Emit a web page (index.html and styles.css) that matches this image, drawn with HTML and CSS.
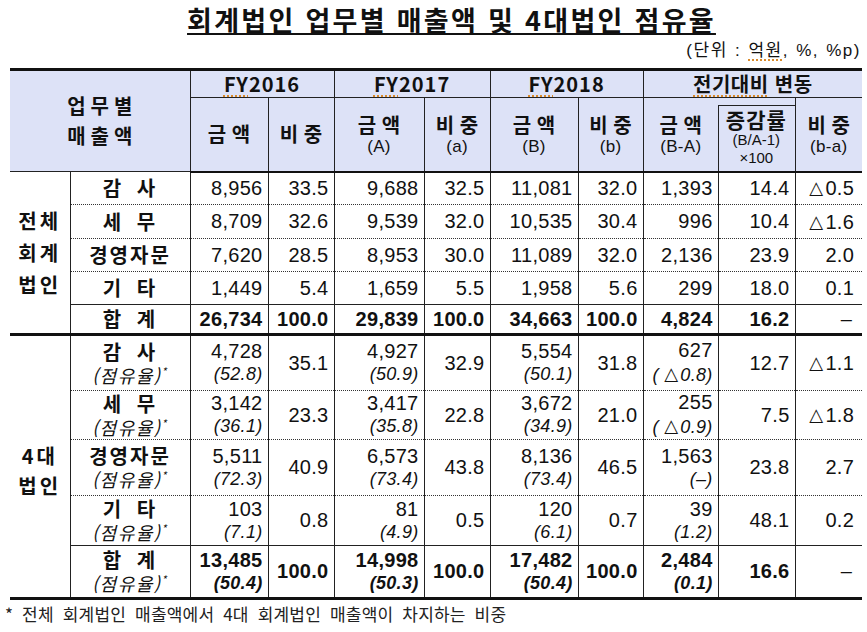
FILE: index.html
```html
<!DOCTYPE html>
<html lang="ko">
<head>
<meta charset="utf-8">
<title>회계법인 업무별 매출액 및 4대법인 점유율</title>
<link rel="stylesheet" href="styles.css">
</head>
<body>
<div class="page">
  <h1 class="title"><span>회계법인 업무별 매출액 및 4대법인 점유율</span></h1>
  <p class="unit">(단위 : <span class="spell">억원</span>, %, %p)</p>
  <table class="sales">
    <colgroup>
      <col class="c-grp"><col class="c-cat">
      <col class="c-a16"><col class="c-r16">
      <col class="c-a17"><col class="c-r17">
      <col class="c-a18"><col class="c-r18">
      <col class="c-ad"><col class="c-gr"><col class="c-rd">
    </colgroup>
    <thead>
      <tr class="yr">
        <th colspan="2" rowspan="2" class="corner"><span class="ln">업무별</span><span class="ln">매출액</span></th>
        <th colspan="2"><span class="spell">FY</span>2016</th>
        <th colspan="2"><span class="spell">FY</span>2017</th>
        <th colspan="2"><span class="spell">FY</span>2018</th>
        <th colspan="3" class="ko-h"><span class="spell">전기대비</span> 변동</th>
      </tr>
      <tr class="sub">
        <th><span class="k">금 액</span></th>
        <th><span class="k">비 중</span></th>
        <th><span class="k">금 액</span><span class="s">(A)</span></th>
        <th><span class="k">비 중</span><span class="s">(a)</span></th>
        <th><span class="k">금 액</span><span class="s">(B)</span></th>
        <th><span class="k">비 중</span><span class="s">(b)</span></th>
        <th class="pre-box"><span class="k">금 액</span><span class="s">(B-A)</span></th>
        <th class="box"><span class="k wide">증감률</span><span class="xs">(B/A-1)</span><span class="xs">×100</span></th>
        <th><span class="k">비 중</span><span class="s">(b-a)</span></th>
      </tr>
    </thead>
    <tbody class="s1">
      <tr class="r33">
        <th rowspan="5" class="grp"><span class="ln">전체</span><span class="ln">회계</span><span class="ln">법인</span></th>
        <th class="cat">감 사</th>
        <td>8,956</td><td>33.5</td><td>9,688</td><td>32.5</td><td>11,081</td><td>32.0</td><td>1,393</td><td>14.4</td><td class="d"><span class="tri">△</span>0.5</td>
      </tr>
      <tr class="r34">
        <th class="cat">세 무</th>
        <td>8,709</td><td>32.6</td><td>9,539</td><td>32.0</td><td>10,535</td><td>30.4</td><td>996</td><td>10.4</td><td class="d"><span class="tri">△</span>1.6</td>
      </tr>
      <tr class="r33">
        <th class="cat">경영자문</th>
        <td>7,620</td><td>28.5</td><td>8,953</td><td>30.0</td><td>11,089</td><td>32.0</td><td>2,136</td><td>23.9</td><td class="d">2.0</td>
      </tr>
      <tr class="r33">
        <th class="cat">기 타</th>
        <td>1,449</td><td>5.4</td><td>1,659</td><td>5.5</td><td>1,958</td><td>5.6</td><td>299</td><td>18.0</td><td class="d">0.1</td>
      </tr>
      <tr class="tot r30">
        <th class="cat">합 계</th>
        <td>26,734</td><td>100.0</td><td>29,839</td><td>100.0</td><td>34,663</td><td>100.0</td><td>4,824</td><td>16.2</td><td class="d dash">–</td>
      </tr>
    </tbody>
    <tbody class="s2">
      <tr class="r56">
        <th rowspan="5" class="grp"><span class="ln">4대</span><span class="ln">법인</span></th>
        <th class="cat"><span class="k">감 사</span><span class="r">(점유율)<sup>*</sup></span></th>
        <td><span class="v">4,728</span><span class="p">(52.8)</span></td><td>35.1</td>
        <td><span class="v">4,927</span><span class="p">(50.9)</span></td><td>32.9</td>
        <td><span class="v">5,554</span><span class="p">(50.1)</span></td><td>31.8</td>
        <td><span class="v">627</span><span class="p">( <span class="tri">△</span>0.8)</span></td><td>12.7</td><td class="d"><span class="tri">△</span>1.1</td>
      </tr>
      <tr class="r49">
        <th class="cat"><span class="k">세 무</span><span class="r">(점유율)<sup>*</sup></span></th>
        <td><span class="v">3,142</span><span class="p">(36.1)</span></td><td>23.3</td>
        <td><span class="v">3,417</span><span class="p">(35.8)</span></td><td>22.8</td>
        <td><span class="v">3,672</span><span class="p">(34.9)</span></td><td>21.0</td>
        <td><span class="v">255</span><span class="p">( <span class="tri">△</span>0.9)</span></td><td>7.5</td><td class="d"><span class="tri">△</span>1.8</td>
      </tr>
      <tr class="r56">
        <th class="cat"><span class="k">경영자문</span><span class="r">(점유율)<sup>*</sup></span></th>
        <td><span class="v">5,511</span><span class="p">(72.3)</span></td><td>40.9</td>
        <td><span class="v">6,573</span><span class="p">(73.4)</span></td><td>43.8</td>
        <td><span class="v">8,136</span><span class="p">(73.4)</span></td><td>46.5</td>
        <td><span class="v">1,563</span><span class="p">(–)</span></td><td>23.8</td><td class="d">2.7</td>
      </tr>
      <tr class="r50">
        <th class="cat"><span class="k">기 타</span><span class="r">(점유율)<sup>*</sup></span></th>
        <td><span class="v">103</span><span class="p">(7.1)</span></td><td>0.8</td>
        <td><span class="v">81</span><span class="p">(4.9)</span></td><td>0.5</td>
        <td><span class="v">120</span><span class="p">(6.1)</span></td><td>0.7</td>
        <td><span class="v">39</span><span class="p">(1.2)</span></td><td>48.1</td><td class="d">0.2</td>
      </tr>
      <tr class="tot r53">
        <th class="cat"><span class="k">합 계</span><span class="r">(점유율)<sup>*</sup></span></th>
        <td><span class="v">13,485</span><span class="p">(50.4)</span></td><td>100.0</td>
        <td><span class="v">14,998</span><span class="p">(50.3)</span></td><td>100.0</td>
        <td><span class="v">17,482</span><span class="p">(50.4)</span></td><td>100.0</td>
        <td><span class="v">2,484</span><span class="p">(0.1)</span></td><td>16.6</td><td class="d dash">–</td>
      </tr>
    </tbody>
  </table>
  <p class="note">* 전체 회계법인 매출액에서 4대 회계법인 매출액이 차지하는 비중</p>
</div>
</body>
</html>
```

FILE: styles.css
```css
* { box-sizing: border-box; }
html, body { margin: 0; padding: 0; background: #fff; }
body {
  font-family: "Liberation Sans", "Noto Sans CJK KR", sans-serif;
  color: #111;
}
.page { width: 867px; height: 632px; overflow: hidden; }

.title {
  margin: 0;
  padding: 2px 0 2px 36px;
  text-align: center;
  font: 700 27px/36px "Noto Sans CJK KR", sans-serif;
  letter-spacing: 2.3px;
  color: #111;
}
.title span {
  text-decoration: underline;
  text-decoration-thickness: 2px;
  text-underline-offset: 2px;
}
.unit {
  margin: 0;
  padding-right: 6px;
  height: 28px;
  text-align: right;
  font: 17px/22px "Liberation Sans", "Noto Sans CJK KR", sans-serif;
  letter-spacing: 1.5px;
  word-spacing: 1px;
}
.spell {
  text-decoration: underline dotted #d98a2a;
  text-decoration-thickness: 2px;
  text-underline-offset: 3px;
}

.sales {
  margin-left: 10px;
  width: 852px;
  table-layout: fixed;
  border-collapse: collapse;
  border-top: 3px solid #111;
  border-bottom: 3px solid #111;
  border-left: hidden;
  border-right: hidden;
}
.c-grp { width: 60px; }
.c-cat { width: 120px; }
.c-a16 { width: 78px; }
.c-r16 { width: 66px; }
.c-a17 { width: 90px; }
.c-r17 { width: 66px; }
.c-a18 { width: 88px; }
.c-r18 { width: 65px; }
.c-ad { width: 75px; }
.c-gr { width: 77px; }
.c-rd { width: 67px; }

.sales th, .sales td {
  border: 1px solid #222;
  padding: 0;
  vertical-align: middle;
}

/* header */
.sales thead th {
  background: #dde2f7;
  text-align: center;
  font-family: "Noto Sans CJK KR", sans-serif;
  font-weight: 700;
}
.yr { height: 28px; }
.yr th {
  font-family: "Liberation Sans", "Noto Sans CJK KR", sans-serif;
  font-size: 20px;
  line-height: 24px;
  letter-spacing: 1px;
}
.yr th.ko-h { font-family: "Noto Sans CJK KR", sans-serif; letter-spacing: 0.5px; }
.sub { height: 74px; }
.sub th { border-bottom: 2px solid #111; }
.corner { border-bottom: 2px solid #111; }
.corner .ln {
  display: block;
  font-size: 20px;
  line-height: 30px;
  letter-spacing: 5px;
  padding-left: 5px;
}
.sub .k {
  display: block;
  font-size: 20px;
  line-height: 24px;
}
.sub .k.wide { letter-spacing: 1px; font-size: 21px; }
.sub .s {
  display: block;
  font: 400 17px/19px "Liberation Sans", sans-serif;
  letter-spacing: 0.3px;
}
.sub .xs {
  display: block;
  font: 400 15px/18px "Liberation Sans", sans-serif;
}
.sub th.pre-box { border-right: none; }
.sub th.box {
  border-left: none;
  padding-top: 6px;
  background:
    linear-gradient(#222, #222) 0 7px / 1px 100% no-repeat,
    linear-gradient(#222, #222) 0 7px / 100% 1px no-repeat,
    #dde2f7;
}

/* body */
.s2 { border-top: 3px solid #111; }
.sales tbody td {
  text-align: right;
  padding-right: 5px;
  font-size: 20px;
  line-height: 23px;
  letter-spacing: 0.3px;
  border-top: 1px dotted #333;
  border-bottom: 1px dotted #333;
}
.sales tbody th.cat {
  border-top: 1px dotted #333;
  border-bottom: 1px dotted #333;
}
.sales tbody tr.tot td, .sales tbody tr.tot th.cat { border-top: 1px solid #222; }
.sales tbody td.d { padding-right: 8px; }
.sales tbody td.dash { padding-right: 10px; }
.tri {
  font-family: "DejaVu Sans", sans-serif;
  font-size: 18px;
  font-style: normal;
  margin-right: 2px;
  vertical-align: 1px;
}

.grp {
  text-align: center;
  font: 700 20px/32px "Noto Sans CJK KR", sans-serif;
  letter-spacing: 3px;
  padding-left: 3px;
}
.grp .ln { display: block; }
.s2 .grp { padding-top: 8px; line-height: 30px; }
.cat {
  text-align: center;
  font: 700 20px/24px "Noto Sans CJK KR", sans-serif;
  letter-spacing: 2px;
  word-spacing: 6px;
}
.cat .k { display: block; line-height: 24px; }
.cat .r {
  display: block;
  font-weight: 400;
  font-style: italic;
  font-size: 18px;
  line-height: 23px;
  letter-spacing: 1.5px;
  word-spacing: 0;
}
.cat sup { font-size: 11px; vertical-align: top; line-height: 14px; }

.tot td { font-weight: 700; letter-spacing: 0.6px; }
.tot td.d { font-weight: 400; }

td .v { display: block; line-height: 23px; }
td .p {
  display: block;
  font-style: italic;
  font-size: 18px;
  line-height: 23px;
  letter-spacing: 0.3px;
}

.r30 { height: 30px; }
.r33 { height: 33px; }
.r34 { height: 34px; }
.r49 { height: 49px; }
.r50 { height: 50px; }
.r53 { height: 53px; }
.r56 { height: 56px; }

.note {
  margin: 3px 0 0;
  padding-left: 5px;
  font: 400 17px/22px "Noto Sans CJK KR", sans-serif;
  word-spacing: 4px;
  letter-spacing: 0.2px;
  color: #222;
}
```
